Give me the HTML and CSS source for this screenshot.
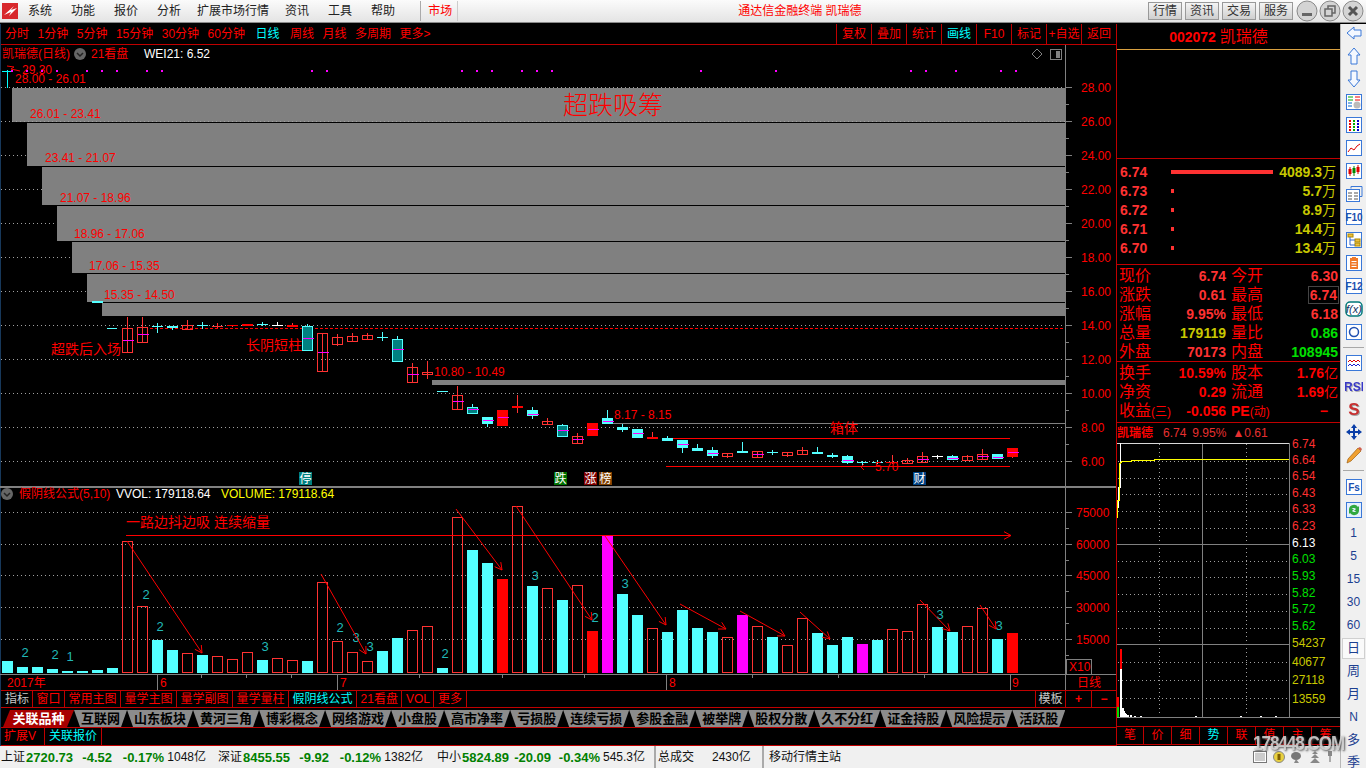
FILE: index.html
```html
<!DOCTYPE html>
<html lang="zh-CN">
<head>
  <meta charset="UTF-8">
  <title>通达信金融终端 凯瑞德</title>
  <link rel="stylesheet" href="styles.css">
</head>
<body>
  <div class="titlebar">
    <svg class="logo" viewBox="0 0 16 16"><rect width="16" height="16" fill="#d8282c"/><path d="M2 12 L12 3 L9 7 L15 5 L7 13 L9 9 Z" fill="#fff"/></svg>
    <nav class="menu">
      <span>系统</span><span>功能</span><span>报价</span><span>分析</span>
      <span class="menu-wide">扩展市场行情</span><span>资讯</span><span>工具</span><span>帮助</span>
    </nav>
    <span class="market">市场</span>
    <span class="app-title">通达信金融终端 凯瑞德</span>
    <div class="sys-btns">
      <span class="sys-btn">行情</span><span class="sys-btn">资讯</span><span class="sys-btn">交易</span><span class="sys-btn">服务</span>
    </div>
    <div class="win-btns">
      <svg viewBox="0 0 22 22"><circle cx="11" cy="11" r="10"/><rect class="glyph" x="6" y="13" width="10" height="3"/></svg>
      <svg viewBox="0 0 22 22"><circle cx="11" cy="11" r="10"/><path class="glyph-line" d="M6 9h7v7H6zM9 9V6h7v7h-3"/></svg>
      <svg viewBox="0 0 22 22"><circle cx="11" cy="11" r="10"/><path class="glyph-x" d="M7 7l8 8M15 7l-8 8"/></svg>
    </div>
  </div>

  <div class="workspace">
    <div class="main-col">
      <div class="panels">
        <div class="left-col">
          <div class="period-bar">
            <span>分时</span><span>1分钟</span><span>5分钟</span><span>15分钟</span><span>30分钟</span><span>60分钟</span>
            <span class="cyan cur">日线</span><span>周线</span><span>月线</span><span>多周期</span><span>更多&gt;</span>
            <div class="period-tools">
              <span>复权</span><span>叠加</span><span>统计</span><span class="cyan">画线</span><span>F10</span><span>标记</span><span>+自选</span><span>返回</span>
            </div>
          </div>

          <svg id="kline" class="kline" viewBox="0 45 1116 645" width="1116" height="645"></svg>

          <div class="ind-row">
            <span class="ind-first">指标</span><span>窗口</span><span>常用主图</span><span>量学主图</span><span>量学副图</span><span>量学量柱</span>
            <span class="cyan">假阴线公式</span><span>21看盘</span><span>VOL</span><span>更多</span>
            <div class="ind-tools">
              <span class="tpl">模板</span><span class="plus">+</span><span class="minus">−</span>
            </div>
          </div>

          <div class="block-tabs">
            <span class="tab tab-on">关联品种</span>
            <span class="tab">互联网</span><span class="tab">山东板块</span><span class="tab">黄河三角</span><span class="tab">博彩概念</span>
            <span class="tab">网络游戏</span><span class="tab">小盘股</span><span class="tab">高市净率</span><span class="tab">亏损股</span>
            <span class="tab">连续亏损</span><span class="tab">参股金融</span><span class="tab">被举牌</span><span class="tab">股权分散</span>
            <span class="tab">久不分红</span><span class="tab">证金持股</span><span class="tab">风险提示</span><span class="tab">活跃股</span>
          </div>

          <div class="ext-row">
            <span>扩展V</span><span class="cyan">关联报价</span>
          </div>
        </div>

        <aside class="quote">
          <div class="q-title">002072 <span class="q-name">凯瑞德</span></div>
          <div class="q-gap"></div>

          <div class="depth">
            <div class="d-row"><b>6.74</b><i class="d-bar d-bar-long"></i><span class="d-vol"><b>4089.3</b>万</span></div>
            <div class="d-row"><b>6.73</b><i class="d-bar"></i><span class="d-vol"><b>5.7</b>万</span></div>
            <div class="d-row"><b>6.72</b><i class="d-bar"></i><span class="d-vol"><b>8.9</b>万</span></div>
            <div class="d-row"><b>6.71</b><i class="d-bar"></i><span class="d-vol"><b>14.4</b>万</span></div>
            <div class="d-row"><b>6.70</b><i class="d-bar"></i><span class="d-vol"><b>13.4</b>万</span></div>
          </div>

          <div class="stats">
            <span>现价</span><b>6.74</b><span>今开</span><b>6.30</b>
            <span>涨跌</span><b>0.61</b><span>最高</span><b class="boxed">6.74</b>
            <span>涨幅</span><b>9.95%</b><span>最低</span><b>6.18</b>
            <span>总量</span><b class="olive">179119</b><span>量比</span><b class="green">0.86</b>
            <span>外盘</span><b>70173</b><span>内盘</span><b class="green">108945</b>
          </div>

          <div class="stats stats-last">
            <span>换手</span><b class="pure">10.59%</b><span>股本</span><b class="pure">1.76<small>亿</small></b>
            <span>净资</span><b class="pure">0.29</b><span>流通</span><b class="pure">1.69<small>亿</small></b>
            <span>收益<em>(三)</em></span><b class="pure">-0.056</b><span class="pe"><b>PE</b><em>(动)</em></span><b class="pure dash">−</b>
          </div>

          <div class="mini-head">
            <span class="mini-name">凯瑞德</span><span>6.74</span><span>9.95%</span><span>▲0.61</span>
          </div>
          <svg id="mini" class="mini" viewBox="1117 436 223 282" width="223" height="282"></svg>
          <div class="mini-gap"></div>
          <div class="q-tabs">
            <span>笔</span><span>价</span><span>细</span><span class="cyan">势</span><span>联</span><span>值</span><span>主</span><span>筹</span>
          </div>
        </aside>
      </div>

      <footer class="status">
        <div class="idx"><span class="i-name">上证</span><b class="i-val">2720.73</b><b class="i-chg">-4.52</b><b class="i-pct">-0.17%</b><span class="i-amt">1048亿</span></div>
        <div class="idx idx-2"><span class="i-name">深证</span><b class="i-val">8455.55</b><b class="i-chg">-9.92</b><b class="i-pct">-0.12%</b><span class="i-amt">1382亿</span></div>
        <div class="idx idx-3"><span class="i-name">中小</span><b class="i-val">5824.89</b><b class="i-chg">-20.09</b><b class="i-pct">-0.34%</b><span class="i-amt i-amt-wide">545.3亿</span></div>
        <div class="s-cell s-total"><span class="s-lbl">总成交</span><span>2430亿</span></div>
        <div class="s-cell s-site">移动行情主站</div>
        <div class="s-icons">
          <svg viewBox="0 0 14 12" width="14" height="12"><rect x=".5" y=".5" width="13" height="11" fill="#fff" stroke="#777"/><path d="M2 3h10M2 5h10M2 7h10M2 9h10" stroke="#999"/></svg>
          <svg viewBox="0 0 12 12" width="12" height="12"><circle cx="6" cy="6" r="5.5" fill="#e8d040" stroke="#888"/><rect x="4.5" y="3" width="3" height="6" fill="#806000"/></svg>
          <svg viewBox="0 0 12 12" width="12" height="12"><ellipse cx="5" cy="5" rx="5" ry="4" fill="#777"/><path d="M5 8l-2 4h5z" fill="#888"/></svg>
          <svg viewBox="0 0 12 12" width="12" height="12"><path d="M6 0l3 3H3zM6 3l4 4H2zM6 7l5 5H1z" fill="#888"/></svg>
          <svg viewBox="0 0 6 12" width="6" height="12"><rect x="1" y="0" width="4" height="5" fill="#888"/><rect x="2.5" y="5" width="1" height="6" fill="#666"/></svg>
        </div>
      </footer>
    </div>

    <div class="sidebar">
      <div class="tool"><svg viewBox="0 0 18 18"><polygon class="ar" points="2,9 9,3 9,6 16,6 16,12 9,12 9,15"/></svg></div>
      <div class="tool"><svg viewBox="0 0 18 18"><polygon class="ar" points="9,1 15,8 12,8 12,17 6,17 6,8 3,8"/></svg></div>
      <div class="tool"><svg viewBox="0 0 18 18"><polygon class="ar" points="9,17 15,10 12,10 12,1 6,1 6,10 3,10"/></svg></div>
      <div class="tool"><svg viewBox="0 0 18 18"><rect class="bx" x="1.5" y="1.5" width="15" height="15"/><path d="M3 4h5M3 7h5" stroke="#0a0"/><path d="M10 4h5M10 7h5" stroke="#e00"/><path d="M3 10h4M3 13h4" stroke="#06c"/><circle cx="12" cy="12" r="3.5" fill="#bbb"/></svg></div>
      <div class="tool"><svg viewBox="0 0 18 18"><rect class="bx" x="1.5" y="1.5" width="15" height="15"/><path d="M4 5h2M4 8h2M4 11h2M4 14h2" stroke="#e00" stroke-width="2"/><path d="M8 5h2M8 8h2M8 11h2M8 14h2" stroke="#0a0" stroke-width="2"/><path d="M12 5h2M12 8h2M12 11h2M12 14h2" stroke="#00c" stroke-width="2"/></svg></div>
      <div class="tool"><svg viewBox="0 0 18 18"><rect class="bx" x="1.5" y="1.5" width="15" height="15"/><polyline points="3,13 6,9 9,11 12,7 15,5" fill="none" stroke="#d00"/></svg></div>
      <div class="tool"><svg viewBox="0 0 18 18"><rect class="bx" x="1.5" y="1.5" width="15" height="15"/><path d="M5 5v9M13 3v9" stroke="#d00"/><path d="M9 4v10" stroke="#080"/><rect x="3.5" y="7" width="3" height="5" fill="#d00"/><rect x="7.5" y="6" width="3" height="5" fill="#080"/><rect x="11.5" y="5" width="3" height="5" fill="#d00"/></svg></div>
      <div class="tool"><svg viewBox="0 0 18 18"><path d="M6 3.5V1.5h11v10h-2" fill="none" stroke="#3a78d8"/><rect class="bx" x="1.5" y="4.5" width="13" height="12"/><path d="M3 8h4M9 8h4M3 11h4M9 11h4M3 14h4M9 14h4" stroke="#555"/></svg></div>
      <div class="tool"><svg viewBox="0 0 18 18"><rect class="bx" x="1.5" y="1.5" width="15" height="15"/><text class="ic-t" x="9" y="13">F10</text></svg></div>
      <div class="tool"><svg viewBox="0 0 18 18"><rect class="bx" x="1.5" y="1.5" width="15" height="15"/><rect x="3" y="3" width="5" height="3" fill="#f0c040" stroke="#a80"/><rect x="10" y="8" width="5" height="3" fill="#f0c040" stroke="#a80"/><rect x="10" y="12" width="5" height="3" fill="#f0c040" stroke="#a80"/><path d="M5 6v8h5M5 9h5" fill="none" stroke="#36c"/></svg></div>
      <div class="tool"><svg viewBox="0 0 18 18"><rect class="bx" x="1.5" y="1.5" width="15" height="15"/><rect x="5" y="4" width="8" height="11" fill="#f07828"/><path d="M7 3h4v2H7z" fill="#f07828"/><path d="M6.5 7.5h5M6.5 10h5M6.5 12.5h5" stroke="#fff"/></svg></div>
      <div class="tool"><svg viewBox="0 0 18 18"><rect class="bx" x="1.5" y="1.5" width="15" height="15"/><text class="ic-t" x="9" y="13">F12</text></svg></div>
      <div class="tool"><svg viewBox="0 0 18 18"><rect x="1" y="2" width="16" height="14" rx="4" fill="#fff" stroke="#007878" stroke-width="1.5"/><text class="ic-fx" x="9" y="13">f(x)</text></svg></div>
      <div class="tool"><svg viewBox="0 0 18 18"><rect class="bx" x="1.5" y="1.5" width="15" height="15"/><circle cx="9" cy="9" r="4.5" fill="none" stroke="#2050b0" stroke-width="1.5"/></svg></div>
      <div class="tool-sep tool-sep-a"></div>
      <div class="tool"><svg viewBox="0 0 18 18"><rect class="bx" x="1.5" y="1.5" width="15" height="15"/><polyline points="3,8 5,6 7,8 9,6 11,8 13,6 15,8" fill="none" stroke="#d00"/><polyline points="3,12 5,10 7,12 9,10 11,12 13,10 15,12" fill="none" stroke="#22c"/></svg></div>
      <div class="tool"><svg viewBox="0 0 18 18"><text class="ic-rsi" x="9" y="13.5">RSI</text></svg></div>
      <div class="tool"><svg viewBox="0 0 18 18"><text class="ic-s" x="9" y="15">S</text></svg></div>
      <div class="tool"><svg viewBox="0 0 18 18"><path d="M9 1l3 4h-2v3h3V6l4 3-4 3v-2h-3v3h2l-3 4-3-4h2v-3H5v2L1 9l4-3v2h3V5H6z" fill="#0a3ea8"/></svg></div>
      <div class="tool"><svg viewBox="0 0 18 18"><path d="M3 13L13 2l3 3L6 15l-4 2z" fill="#f0a030" stroke="#a06010" stroke-width=".7"/><path d="M13 2l3 3 1-2-2-2z" fill="#d06050"/></svg></div>
      <div class="tool-sep tool-sep-b"></div>
      <div class="tool"><svg viewBox="0 0 18 18"><rect class="bx" x="1.5" y="1.5" width="15" height="15"/><text class="ic-t" x="9" y="13">Fs</text></svg></div>
      <div class="tool"><svg viewBox="0 0 18 18"><rect class="bx bx-soft" x="1.5" y="1.5" width="15" height="15"/><path d="M4 8a5 5 0 0 1 9-2l1-1v5h-5l2-2a3 3 0 0 0-5 1zM14 10a5 5 0 0 1-9 2l-1 1V8h5l-2 2a3 3 0 0 0 5-1z" fill="#30a840"/></svg></div>
      <div class="tool tool-t">1</div><div class="tool tool-t">5</div><div class="tool tool-t">15</div><div class="tool tool-t">30</div><div class="tool tool-t">60</div>
      <div class="tool tool-t tool-cjk tool-on">日</div><div class="tool tool-t tool-cjk">周</div><div class="tool tool-t tool-cjk">月</div>
      <div class="tool tool-t">N</div><div class="tool tool-t tool-cjk">多</div><div class="tool tool-t tool-cjk tool-end">季</div>
    </div>
  </div>

  <div class="watermark">178448.COM</div>

  <script src="chart.js"></script>
</body>
</html>
```

FILE: styles.css
```css
* {
  box-sizing: border-box;
}
html, body {
  margin: 0;
  padding: 0;
  height: 768px;
  overflow: hidden;
}
body {
  background-color: #000;
  color: #f00;
  font-family: "Liberation Sans", "Noto Sans CJK SC", sans-serif;
  font-size: 12px;
  line-height: 1;
}
.cyan {
  color: #00ffff;
}

/* title bar */
.titlebar {
  height: 23px;
  display: flex;
  align-items: center;
  background: linear-gradient(#fbfbfb, #e4e4e4);
  border-bottom: 1px solid #8a8a8a;
  color: #222;
}
.logo {
  width: 16px;
  height: 16px;
  margin-left: 2px;
}
.menu {
  display: flex;
  gap: 19px;
  margin-left: 10px;
}
.menu-wide {
  margin: 0 -3px;
}
.market {
  margin-left: 25px;
  padding: 4px 5px 4px 7px;
  border-left: 1px solid #aaa;
  border-right: 1px solid #ccc;
  color: #f00;
}
.app-title {
  margin-left: 280px;
  color: #f00;
}
.sys-btns {
  display: flex;
  gap: 3px;
  margin-left: auto;
}
.sys-btn {
  width: 34px;
  height: 18px;
  line-height: 16px;
  text-align: center;
  border: 1px solid #999;
  background: linear-gradient(#f4f4f4, #cfcfcf);
  color: #333;
}
.win-btns {
  display: flex;
  gap: 1px;
  margin: 0 2px 0 3px;
}
.win-btns svg {
  width: 22px;
  height: 22px;
}
.win-btns circle {
  fill: #d4d4d4;
  stroke: #888;
}
.glyph {
  fill: #666;
}
.glyph-line {
  fill: none;
  stroke: #666;
  stroke-width: 1.5;
}
.glyph-x {
  fill: none;
  stroke: #555;
  stroke-width: 3;
}

/* frame */
.workspace {
  display: flex;
  height: 744px;
  margin-top: 1px;
}
.main-col {
  width: 1340px;
  display: flex;
  flex-direction: column;
}
.panels {
  display: flex;
  height: 722px;
}
.left-col {
  width: 1116px;
  border-left: 1px solid #17385a;
}

/* period bar */
.period-bar {
  height: 21px;
  display: flex;
  align-items: center;
  gap: 8.5px;
  padding-left: 4px;
  border-bottom: 1px solid #c00000;
}
.period-bar .cur {
  margin: 0 2px;
}
.period-tools {
  display: flex;
  margin-left: auto;
  height: 20px;
}
.period-tools span {
  width: 35px;
  line-height: 20px;
  text-align: center;
  border-left: 1px solid #c00000;
}

/* main chart */
.kline {
  display: block;
  margin-left: -1px;
}
.kline text, .mini text {
  font-size: 12px;
  fill: #f00;
}
.kline line, .kline rect, .mini line, .mini rect, .mini polyline {
  shape-rendering: crispEdges;
}
.kline line, .mini line {
  stroke-width: 1;
}
.grid {
  stroke: #a0a0a0;
  stroke-dasharray: 1 3;
}
.axis {
  stroke: #808080;
}
.blk {
  fill: #808080;
}
.blk-edge {
  stroke: #000;
}
.dash-red {
  stroke: #f00;
  stroke-dasharray: 3 2;
}
.red-line {
  stroke: #f00;
}
.kline .arrow {
  stroke: #f00;
  fill: none;
  shape-rendering: auto;
}
.up-box {
  fill: none;
  stroke: #ff3232;
}
.up-wick {
  stroke: #ff3232;
}
.up-fill {
  fill: #f00;
}
.dn-fill {
  fill: #54ffff;
}
.dn-wick {
  stroke: #54ffff;
}
.teal-fill {
  fill: #008080;
  stroke: #54ffff;
}
.white-wick {
  stroke: #fff;
}
.white-fill {
  fill: #fff;
}
.green-fill {
  fill: #00e000;
}
.mid {
  stroke: #f0f;
}
.dot {
  fill: #f0f;
}
.mag-fill {
  fill: #f0f;
}
.kline .t-white {
  fill: #fff;
}
.kline .t-yellow {
  fill: #ff0;
}
.kline .t-num {
  fill: #20b8b8;
  font-size: 13px;
}
.kline .t-big {
  font-size: 25px;
  font-weight: 300;
}
.kline .t-note {
  font-size: 14px;
}
.kline .t-badge {
  font-size: 12px;
  fill: #fff;
}
.cross-cyan {
  stroke: #00ffff;
}
.circle-ic {
  fill: #666;
}
.circle-ch {
  fill: none;
  stroke: #222;
  stroke-width: 1.5;
}
.corner-ic {
  fill: none;
  stroke: #808080;
}
.corner-fill {
  fill: #808080;
}

/* indicator row */
.ind-row {
  height: 18px;
  display: flex;
  align-items: stretch;
  border-top: 1px solid #c00000;
  border-bottom: 1px solid #c00000;
  line-height: 16px;
}
.ind-row > span {
  padding: 0 3.5px;
  border-right: 1px solid #c00000;
}
.ind-row .ind-first {
  padding: 0 3px 0 4px;
  color: #c8c8c8;
}
.ind-tools {
  display: flex;
  margin-left: auto;
}
.ind-tools span {
  text-align: center;
  border-left: 1px solid #c00000;
}
.tpl {
  width: 30px;
  color: #c8c8c8;
}
.plus {
  width: 26px;
  font-weight: bold;
}
.minus {
  width: 25px;
  font-weight: bold;
}

/* block tabs */
.block-tabs {
  height: 20px;
  display: flex;
  align-items: flex-end;
  padding-left: 2px;
  border-bottom: 1px solid #c00000;
}
.tab {
  height: 17px;
  padding: 0 7px;
  line-height: 17px;
  font-size: 13px;
  font-weight: bold;
  color: #000;
  background-color: #8c8c8c;
  clip-path: polygon(0 0, 100% 0, calc(100% - 6px) 100%, 6px 100%);
}
.tab-on {
  padding: 0 9.5px;
  color: #fff;
  background-color: #a80000;
  clip-path: polygon(7px 0, 100% 0, calc(100% - 7px) 100%, 0 100%);
}

/* extension row */
.ext-row {
  height: 18px;
  display: flex;
  line-height: 17px;
  border-bottom: 1px solid #c00000;
}
.ext-row span {
  padding: 0 4px;
  border-right: 1px solid #c00000;
}
.ext-row span:first-child {
  padding-left: 3px;
  width: 44px;
}

/* quote panel */
.quote {
  width: 224px;
  border-left: 1px solid #c00000;
  display: flex;
  flex-direction: column;
}
.q-title {
  height: 26px;
  padding: 5px 20px 0 0;
  text-align: center;
  font-size: 14px;
  font-weight: bold;
  border-bottom: 1px solid #d8a040;
}
.q-name {
  font-size: 16px;
  font-weight: normal;
}
.q-gap {
  height: 109px;
  border-bottom: 1px solid #c00000;
}
.depth {
  height: 106px;
  padding-top: 3px;
  border-bottom: 1px solid #c00000;
}
.d-row {
  height: 19px;
  display: flex;
  align-items: center;
  padding-left: 3px;
  font-size: 14px;
}
.d-row > b {
  width: 51px;
  color: #ff3232;
}
.d-bar {
  display: block;
  width: 3px;
  height: 4px;
  background-color: #ff3232;
}
.d-bar-long {
  width: 102px;
}
.d-vol {
  margin-left: auto;
  padding-right: 4px;
  color: #c8c800;
}
.stats {
  height: 97px;
  display: grid;
  grid-template-columns: 33px 74px 38px 74px;
  grid-auto-rows: 19px;
  align-items: center;
  padding: 1px 0 0 2px;
  border-bottom: 1px solid #c00000;
  font-size: 16px;
  white-space: nowrap;
}
.stats b {
  font-size: 14px;
  text-align: right;
  color: #ff3232;
}
.stats span:nth-child(4n+3) {
  margin-left: 5px;
}
.stats-last {
  height: 61px;
}
.stats .pure {
  color: #f00;
}
.stats .olive {
  color: #c8c800;
}
.stats .green {
  color: #00e000;
}
.stats .boxed {
  justify-self: end;
  width: 31px;
  height: 18px;
  line-height: 16px;
  margin-right: -1px;
  padding-right: 1px;
  border: 1px solid #444;
}
.stats small {
  font-size: 14px;
  font-weight: normal;
}
.stats em {
  font-size: 12px;
  font-style: normal;
}
.stats .pe b {
  color: #f00;
}
.stats .dash {
  padding-right: 10px;
}
.mini-head {
  height: 13px;
  display: flex;
  align-items: flex-start;
  gap: 6px;
  padding-top: 4px;
  color: #e83030;
  overflow: visible;
}
.mini-name {
  width: 40px;
  font-weight: bold;
  color: #f00;
}
.mini {
  display: block;
}
.mini .grid {
  stroke: #a0a0a0;
}
.m-solid {
  stroke: #808080;
}
.m-top {
  stroke: #d8d8d8;
}
.m-yellow {
  fill: none;
  stroke: #ffff00;
}
.m-white {
  fill: none;
  stroke: #ffffff;
}
.mini .t-up {
  fill: #ff3030;
}
.mini .t-flat {
  fill: #fff;
}
.mini .t-down {
  fill: #00e000;
}
.mini .t-vol {
  fill: #c8c800;
}
.mini-gap {
  height: 9px;
  border-bottom: 1px solid #c00000;
}
.q-tabs {
  height: 18px;
  display: flex;
  border-bottom: 1px solid #c00000;
}
.q-tabs span {
  width: 28px;
  line-height: 17px;
  text-align: center;
  border-left: 1px solid #c00000;
}
.q-tabs span:first-child {
  width: 26px;
  border-left: none;
}

/* status bar */
.status {
  height: 22px;
  display: flex;
  align-items: center;
  padding-left: 1px;
  background-color: #f0f0f0;
  color: #111;
}
.idx {
  display: flex;
  align-items: center;
}
.idx-2 {
  margin-left: 12px;
}
.idx-3 {
  margin-left: 14px;
}
.i-name {
  width: 25px;
}
.idx b {
  font-size: 13px;
  color: #008000;
}
.i-val {
  width: 47px;
  white-space: nowrap;
}
.idx .i-chg {
  width: 39px;
  text-align: right;
}
.idx .i-pct {
  width: 52px;
  text-align: right;
}
.idx-3 .i-chg {
  width: 42px;
}
.idx-3 .i-pct {
  width: 49px;
}
.i-amt {
  width: 42px;
  text-align: right;
}
.i-amt-wide {
  width: 45px;
}
.s-cell {
  height: 22px;
  line-height: 22px;
  display: flex;
  border-left: 2px solid #aaa;
}
.s-total {
  margin-left: 9px;
  padding-left: 2px;
  width: 108px;
}
.s-lbl {
  width: 54px;
}
.s-site {
  padding-left: 5px;
}
.s-icons {
  display: flex;
  align-items: center;
  gap: 6px;
  margin-left: auto;
  padding-right: 7px;
}

/* right toolbar */
.sidebar {
  width: 26px;
  height: 744px;
  border-left: 1px solid #b8b8b8;
  background-color: #f0f0f0;
  overflow: hidden;
}
.tool {
  height: 23px;
  text-align: center;
}
.tool svg {
  display: block;
  width: 18px;
  height: 18px;
  margin: 0 auto;
}
.ar {
  fill: #f4f8ff;
  stroke: #3a78d8;
}
.bx {
  fill: #fff;
  stroke: #3a78d8;
}
.bx-soft {
  fill: #e4f0ff;
}
.ic-t {
  font-size: 10px;
  font-weight: bold;
  fill: #1c50b0;
  text-anchor: middle;
}
.ic-fx {
  font-size: 11px;
  font-style: italic;
  fill: #103060;
  text-anchor: middle;
}
.ic-rsi {
  font-size: 12px;
  font-weight: bold;
  fill: #3838c8;
  text-anchor: middle;
  filter: drop-shadow(1px 1px 0 #b0b0b0);
}
.ic-s {
  font-size: 17px;
  font-weight: bold;
  fill: #c83030;
  text-anchor: middle;
  filter: drop-shadow(1px 1px 0 #a0a0a0);
}
.tool-sep {
  border-top: 1px solid #a8a8a8;
  margin: 1px 2px 0;
}
.tool-sep-a {
  height: 7px;
}
.tool-sep-b {
  height: 8px;
}
.tool-t {
  line-height: 18px;
  font-size: 12px;
  color: #1c3f90;
}
.tool-cjk {
  font-size: 13px;
}
.tool-on {
  background-color: #fafafa;
  border: 1px solid #d0d0d0;
  height: 21px;
  margin: -1px 1px 3px;
}
.tool-end {
  height: 15px;
  line-height: 15px;
}

.watermark {
  position: absolute;
  left: 1253px;
  top: 733px;
  font-size: 17px;
  font-weight: bold;
  letter-spacing: -1px;
  color: rgba(215, 215, 215, 0.85);
  text-shadow: 1px 1px 2px #555;
  transform: scaleY(1.2);
  transform-origin: top;
}
```

FILE: chart.js
```js
// candle: [high, top, bottom, low, type, mid]  (pixel rows of the screenshot)
// type: h hollow red, f filled red, c cyan, t teal, w white
const candles = [
  [317,328,352,352,'h',340],[317,327,342,342,'h',334],[323,326,326,333,'c'],[326,326,328,330,'c'],
  [320,325,329,329,'h'],[322,325,325,329,'c'],[323,326,326,328,'f'],[325,325,326,327,'f'],
  [324,324,326,326,'f'],[322,324,324,326,'c'],[322,325,325,326,'w'],[323,325,327,327,'f'],
  [324,326,350,350,'t',338],[333,333,371,371,'h',352],[334,337,344,346,'h'],[333,336,341,341,'h'],
  [333,335,339,339,'h'],[332,337,337,341,'c'],[336,339,361,361,'t',349],[363,367,382,382,'h',374],
  [361,372,374,379,'h'],[391,391,391,391,'t'],[386,395,409,409,'h',401],[404,407,413,413,'t',409],
  [417,417,424,427,'c',420],[410,410,426,426,'f',417],[395,406,408,413,'f'],[407,410,416,419,'c',414],
  [418,421,424,425,'h'],[424,425,436,436,'t',430],[433,436,443,443,'h',439],[423,423,436,436,'f',429],
  [410,418,424,424,'c',421],[424,427,430,432,'c'],[429,429,438,438,'c',433],[432,437,439,439,'f'],
  [436,438,441,441,'c'],[440,440,448,453,'c',444],[444,448,451,451,'c'],[447,450,456,458,'c',453],
  [453,453,456,458,'h'],[442,451,453,453,'c'],[451,451,457,457,'h',454],[450,452,452,455,'c'],
  [452,452,455,457,'h'],[447,450,454,454,'h'],[447,452,454,454,'c'],[453,455,457,458,'c'],
  [455,456,463,464,'c',460],[461,462,462,465,'c'],[460,462,463,464,'c'],[455,462,463,464,'f'],
  [458,460,463,463,'h'],[452,456,462,462,'h',459],[455,456,456,459,'w'],[455,456,460,460,'c',458],
  [455,456,460,460,'h'],[449,454,459,459,'h',456],[454,454,459,459,'c',457],[448,448,457,458,'f',452]
];

// volume bars from x=7.5, 15px apart: [top row, type] (m magenta)
const vols = [
  [661,'c'],[667,'c'],[667,'c'],[669,'c'],[671,'c'],[671,'c'],[670,'c'],[668,'c'],
  [541,'h'],[606,'h'],[640,'c'],[650,'c'],[653,'h'],[655,'c'],[656,'h'],[659,'h'],
  [652,'h'],[660,'c'],[658,'h'],[660,'h'],[661,'c'],[582,'h'],[641,'h'],[652,'h'],
  [661,'h'],[651,'c'],[638,'c'],[630,'h'],[626,'h'],[668,'c'],[517,'h'],[550,'c'],
  [563,'c'],[579,'f'],[506,'h'],[586,'c'],[588,'h'],[600,'c'],[585,'h'],[631,'f'],
  [536,'m'],[594,'c'],[615,'c'],[628,'h'],[632,'c'],[610,'c'],[628,'c'],[632,'c'],
  [637,'h'],[615,'m'],[626,'h'],[637,'c'],[645,'h'],[618,'h'],[633,'c'],[645,'c'],
  [637,'c'],[644,'m'],[640,'c'],[629,'h'],[631,'h'],[604,'h'],[627,'c'],[632,'c'],
  [626,'h'],[608,'h'],[639,'c'],[633,'f']
];

let out = '';
const line = (x1, y1, x2, y2, cls) => {
  out += `<line x1="${x1}" y1="${y1}" x2="${x2}" y2="${y2}" class="${cls}"/>`;
};
const rect = (x, y, w, h, cls) => {
  out += `<rect x="${x}" y="${y}" width="${w}" height="${h}" class="${cls}"/>`;
};
const text = (x, y, str, cls) => {
  out += `<text x="${x}" y="${y}" class="${cls || ''}">${str}</text>`;
};
const arrow = (x1, y1, x2, y2) => {
  const a = Math.atan2(y2 - y1, x2 - x1);
  const hx = (d) => (x2 - 8 * Math.cos(a + d)).toFixed(1);
  const hy = (d) => (y2 - 8 * Math.sin(a + d)).toFixed(1);
  out += `<path class="arrow" d="M${x1} ${y1}L${x2} ${y2}M${hx(0.5)} ${hy(0.5)}L${x2} ${y2}L${hx(-0.5)} ${hy(-0.5)}"/>`;
};

// price grid
for (let p = 6; p <= 28; p += 2) {
  const y = 87.5 + (28 - p) * 17;
  if (y < 330 || y > 340) line(1, y, 1065, y, 'grid');
  line(1065, y, 1072, y, 'axis');
  text(1081, y + 4.5, p.toFixed(2));
}
for (let p = 7; p < 28; p += 2) line(1065, 87.5 + (28 - p) * 17, 1069, 87.5 + (28 - p) * 17, 'axis');
line(1, 325.5, 1065, 325.5, 'grid');

// header
text(2, 58, '凯瑞德(日线)');
out += '<circle cx="80" cy="54" r="6" class="circle-ic"/><path d="M77 53l3 3 3-3" class="circle-ch"/>';
text(91, 58, '21看盘');
text(144, 58, 'WEI21: 6.52', 't-white');
out += '<path d="M1037 49l5 5-5 5-5-5z" class="corner-ic"/>';
out += '<rect x="1050.5" y="49.5" width="11" height="10" rx="1" class="corner-ic"/><rect x="1056" y="51" width="4" height="7" class="corner-fill"/>';

// gray zones
const zones = [[12,88,122],[27,122,166],[42,166,205],[57,205,241],[72,241,273],[87,273,302],[102,302,316]];
zones.forEach((z) => rect(z[0], z[1], 1065 - z[0], z[2] - z[1], 'blk'));
zones.slice(1).forEach((z) => line(z[0] - 15, z[1] + 0.5, 1065, z[1] + 0.5, 'blk-edge'));
line(12, 121.5, 1065, 121.5, 'grid');
rect(432, 380, 633, 5, 'blk');

text(15, 83, '28.00 - 26.01');
text(30, 118, '26.01 - 23.41');
text(45, 162, '23.41 - 21.07');
text(60, 202, '21.07 - 18.96');
text(74, 238, '18.96 - 17.06');
text(89, 270, '17.06 - 15.35');
text(104, 299, '15.35 - 14.50');
text(563, 114, '超跌吸筹', 't-big');
text(22, 74, '29.30');
out += '<path class="arrow" d="M7 66l7 1-3 2 9 2"/>';
line(7.5, 70, 7.5, 88, 'cross-cyan');
line(2, 71.5, 13, 71.5, 'cross-cyan');
[11,26,41,56,86,101,116,146,161,311,326,461,476,491,521,536,551,700,775,910,925,955,1000,1015].forEach((x) => rect(x, 70, 2, 2, 'dot'));

line(150, 328.5, 1065, 328.5, 'dash-red');
rect(92, 301, 10, 1, 'teal-fill');
line(107, 328.5, 117, 328.5, 'teal-fill');
line(607, 423.5, 1065, 423.5, 'axis');
line(666, 438.5, 1010, 438.5, 'red-line');
line(666, 466.5, 1010, 466.5, 'red-line');

// candles
candles.forEach((c, i) => {
  const x = 127.5 + 15 * i;
  const [hi, top, bot, lo, type, mid] = c;
  const wick = { h: 'up-wick', f: 'up-wick', c: 'dn-wick', t: 'dn-wick', w: 'white-wick' }[type];
  line(x, hi, x, lo, wick);
  if (type === 'w' || (top === bot)) {
    line(x - 5.5, top + 0.5, x + 5.5, top + 0.5, type === 't' ? 'teal-fill' : wick);
  } else if (type === 'h') {
    rect(x - 5, top + 0.5, 10, bot - top, 'up-box');
  } else if (type === 'f') {
    rect(x - 5.5, top, 11, bot - top, 'up-fill');
  } else if (type === 'c') {
    rect(x - 5.5, top, 11, bot - top, 'dn-fill');
  } else {
    rect(x - 5, top + 0.5, 10, bot - top, 'teal-fill');
  }
  if (mid) line(x - 5, mid + 0.5, x + 6, mid + 0.5, 'mid');
});

text(51, 354, '超跌后入场', 't-note');
text(246, 350, '长阴短柱', 't-note');
text(434, 376, '10.80 - 10.49');
text(614, 419, '8.17 - 8.15');
text(830, 433, '箱体', 't-note');
text(875, 471, '5.70');
out += '<path class="arrow" d="M864 464l-3 3 3 3"/>';

// event badges
[[299,'停','#008080'],[554,'跌','#007000'],[584,'涨','#800000'],[599,'榜','#804000'],[913,'财','#004080']].forEach((b) => {
  out += `<rect x="${b[0]}" y="472" width="13" height="13" fill="${b[2]}"/>`;
  text(b[0] + 0.5, 483, b[1], 't-badge');
});

line(0, 486.5, 1116, 486.5, 'axis');
line(0, 487.5, 1116, 487.5, 'axis');

// volume pane
out += '<circle cx="7" cy="494" r="6" class="circle-ic"/><path d="M4 493l3 3 3-3" class="circle-ch"/>';
text(19, 498, '假阴线公式(5,10)');
text(116, 498, 'VVOL: 179118.64', 't-white');
text(221, 498, 'VOLUME: 179118.64', 't-yellow');

[[512.5,'75000'],[544.5,'60000'],[575.5,'45000'],[607.5,'30000'],[639.5,'15000']].forEach((v) => {
  line(1, v[0], 1065, v[0], 'grid');
  line(1065, v[0], 1072, v[0], 'axis');
  line(1065, v[0] + 16, 1069, v[0] + 16, 'axis');
  text(1076, v[0] + 4.5, v[1]);
});

vols.forEach((v, i) => {
  const x = 7.5 + 15 * i;
  if (v[1] === 'h') rect(x - 5, v[0] + 0.5, 10, 672 - v[0], 'up-box');
  else rect(x - 5.5, v[0], 11, 673 - v[0], { c: 'dn-fill', f: 'up-fill', m: 'mag-fill' }[v[1]]);
});

[[25,657,'2'],[55,659,'2'],[70,661,'1'],[146,599,'2'],[160,631,'2'],[265,651,'3'],[340,632,'2'],[356,642,'3'],[370,651,'3'],[445,658,'2'],[535,580,'3'],[595,622,'2'],[625,588,'3'],[940,619,'3'],[999,630,'3']].forEach((n) => {
  out += `<text x="${n[0]}" y="${n[1]}" text-anchor="middle" class="t-num">${n[2]}</text>`;
});

text(126, 527, '一路边抖边吸 连续缩量', 't-note');
arrow(126, 535.5, 1011, 535.5);
arrow(127, 541, 202, 653);
arrow(321, 574, 366, 654);
arrow(456, 509, 502, 570);
arrow(516, 506, 592, 620);
arrow(605, 536, 666, 625);
arrow(680, 604, 726, 629);
arrow(740, 611, 785, 636);
arrow(800, 612, 830, 639);
arrow(920, 600, 950, 631);
arrow(980, 605, 996, 629);

// right axis frame and time axis
line(1065.5, 45, 1065.5, 690, 'axis');
line(0, 674.5, 1116, 674.5, 'axis');
out += '<rect x="1066.5" y="659.5" width="25" height="15" class="corner-ic"/>';
text(1069, 671, 'X10');
[157,337,666,1010].forEach((x) => line(x + 0.5, 675, x + 0.5, 690, 'axis'));
[201,246,291,419,502,584,752,838,924].forEach((x) => line(x + 0.5, 675, x + 0.5, 678, 'axis'));
text(7, 687, '2017年');
text(160, 687, '6');
text(340, 687, '7');
text(669, 687, '8');
text(1012, 687, '9');
text(1077, 687, '日线');

document.getElementById('kline').innerHTML = out;

// intraday mini chart
out = '';
const hrow = [461,478,494,511,528,561,577,594,611,628,662,680,698];
hrow.forEach((y) => line(1118, y + 0.5, 1289, y + 0.5, 'grid'));
[1159.5, 1246.5].forEach((x) => line(x, 444, x, 716, 'grid'));
line(1117, 443.5, 1289, 443.5, 'm-top');
line(1117, 544.5, 1289, 544.5, 'm-solid');
line(1117, 644.5, 1289, 644.5, 'm-solid');
line(1202.5, 444, 1202.5, 717, 'm-solid');
line(1289.5, 443, 1289.5, 717, 'm-solid');
line(1117, 717.5, 1340, 717.5, 'm-solid');

out += '<polyline class="m-white" points="1120.5,443 1120.5,487 1118.5,487 1118.5,500 1117.5,517"/>';
out += '<polyline class="m-yellow" points="1117.5,518 1117.5,500 1119.5,500 1119.5,464 1122.5,461 1131.5,461 1131.5,460.5 1154,460.5 1154,459.5 1289,459.5"/>';

// volume spikes
rect(1120, 649, 2, 20, 'up-fill');
rect(1120, 669, 2, 48, 'white-fill');
rect(1117, 697, 2, 10, 'up-fill');
rect(1117, 707, 2, 10, 'green-fill');
[[1122,708],[1123,711],[1124,713],[1125,714],[1127,715],[1130,715],[1134,716],[1140,716],[1195,716],[1240,716],[1260,716],[1275,716]].forEach((b) => {
  rect(b[0], b[1], 2, 717 - b[1], 'white-fill');
});

[[447.5,'6.74','t-up'],[464,'6.64','t-up'],[480,'6.54','t-up'],[497,'6.43','t-up'],[513,'6.33','t-up'],[530,'6.23','t-up'],[547,'6.13','t-flat'],[563,'6.03','t-down'],[580,'5.93','t-down'],[597,'5.82','t-down'],[613,'5.72','t-down'],[630,'5.62','t-down'],[647,'54237','t-vol'],[666,'40677','t-vol'],[684,'27118','t-vol'],[703,'13559','t-vol']].forEach((t) => {
  text(1292, t[0], t[1], t[2]);
});

document.getElementById('mini').innerHTML = out;
```
